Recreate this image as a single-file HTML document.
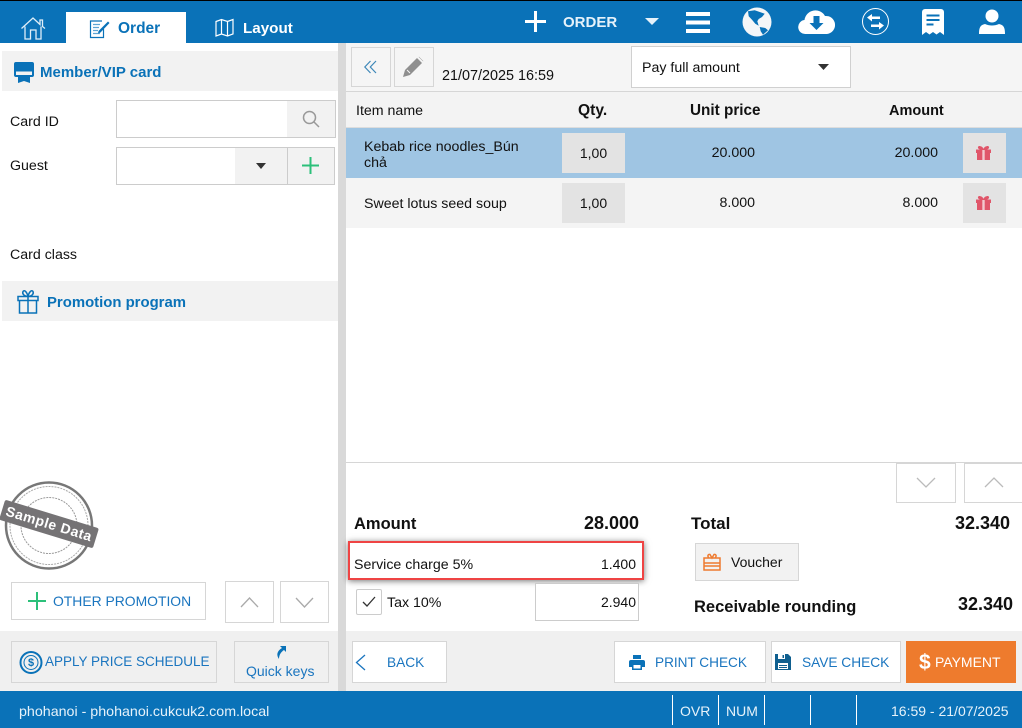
<!DOCTYPE html>
<html><head><meta charset="utf-8">
<style>
html,body{margin:0;padding:0;width:1022px;height:728px;overflow:hidden;background:#fff}
body{font-family:"Liberation Sans",sans-serif;font-size:14.2px;color:#111;position:relative}
.a,.t,svg.i{position:absolute}
.t{white-space:nowrap;line-height:16px}
.box{position:absolute;box-sizing:border-box;border:1px solid #d6d6d6;background:#fff}
.g{background:#f2f2f2}
.b{font-weight:bold}
.bl{color:#0a72b8}
.r{text-align:right}
</style></head><body>
<!-- header -->
<div class="a" style="left:0;top:0;width:1022px;height:43px;background:#0a72b8"></div>
<div class="a" style="left:0;top:0;width:1022px;height:1px;background:#000"></div>
<div class="a" style="left:66px;top:12px;width:120px;height:31px;background:#fff"></div>
<svg class="i" style="left:20px;top:16px" width="26" height="24" viewBox="0 0 26 24" fill="none" stroke="#dfeef8" stroke-width="1.3"><path d="M1.5 12.500 13 2l7 6.500V4h2.500v6.500L25 12.500M5 10.500V23h5.500v-9h5.500v9H21V10.500"/></svg>
<svg class="i" style="left:89px;top:18px" width="22" height="21" viewBox="0 0 22 21" fill="none" stroke="#0a72b8"><path d="M13 3H1.500v16.500h13V11" stroke-width="1.200"/><path d="M4 6.500h7M4 9.500h6M4 12.500h5M4 15.500h7" stroke-width="1.200" stroke="#5fa5d4"/><path d="M9.500 13 19 3.500l1.500 1.500-9 9.500-2.500 1z" fill="#0a72b8" stroke="none"/></svg>
<div class="t b bl" style="left:118px;top:21px;font-size:15.500px">Order</div>
<svg class="i" style="left:215px;top:18px" width="19" height="19" viewBox="0 0 19 19" fill="none" stroke="#fff" stroke-width="1.200"><path d="M1 3.500 6.500 1.500l6 2 5.500-2V16l-5.500 2-6-2L1 18zM6.500 1.500V16M12.500 3.500V18"/></svg>
<div class="t b" style="left:243px;top:21px;font-size:15.200px;color:#fff">Layout</div>
<svg class="i" style="left:525px;top:11px" width="21" height="21" viewBox="0 0 21 21" fill="#fff"><path d="M9 0h3v9h9v3h-9v9H9v-9H0V9h9z"/></svg>
<div class="t b" style="left:563px;top:15px;font-size:15px;color:#e6f2fa">ORDER</div>
<svg class="i" style="left:645px;top:18px" width="14" height="8" viewBox="0 0 14 8" fill="#e6f2fa"><path d="M0 0h14L7 7z"/></svg>
<svg class="i" style="left:686px;top:12px" width="24" height="21" viewBox="0 0 24 21" fill="#fff"><path d="M0 0h24v4H0zM0 8.500h24v4H0zM0 17h24v4H0z"/></svg>
<svg class="i" style="left:742px;top:7px" width="30" height="30" viewBox="0 0 30 30"><circle cx="15" cy="15" r="14.500" fill="#f4f6f8"/><path d="M6 4.300 12.700 3.300 22.700 6.700 20 10 16.700 12 15.300 14.300 16.700 18.700 13.300 16.700 10 12.700 6.700 9.300zM17.700 20 23.300 21 26 23.300 21 27.700 18.700 24.300z" fill="#0a72b8"/></svg>
<svg class="i" style="left:798px;top:9px" width="37" height="26" viewBox="0 0 37 26"><path d="M8 25a7 7 0 0 1-1.500-14A11 11 0 0 1 27 7a9 9 0 0 1 2 18z" fill="#fff"/><path d="M15.500 7h6v7h4L18.500 21l-7-7h4z" fill="#0a72b8"/></svg>
<svg class="i" style="left:861px;top:7px" width="29" height="29" viewBox="0 0 29 29" fill="none" stroke="#fff"><circle cx="14.500" cy="14.500" r="13" stroke-width="1"/><path d="M6 10.500 11 7v2.500h8v2.500h-8v2.500zM23 18.500 18 15v2.500h-8V20h8v2.500z" fill="#fff" stroke="none"/></svg>
<svg class="i" style="left:922px;top:9px" width="22" height="26" viewBox="0 0 22 26"><path d="M3 0h16a3 3 0 0 1 3 3v23l-4-3-3.500 2.500L11 23l-3.500 2.500L4 23l-4 3V3a3 3 0 0 1 3-3z" fill="#fff"/><path d="M4.500 5.500h13v2h-13zM4.500 10h13v2h-13zM4.500 14.500h7v2h-7z" fill="#0a72b8"/></svg>
<svg class="i" style="left:979px;top:9px" width="26" height="26" viewBox="0 0 26 26" fill="#fff"><circle cx="13" cy="7" r="6.500"/><path d="M0 25c0-6 1-9 6-10 4 2 10 2 14 0 5 1 6 4 6 10z"/></svg>

<!-- left panel -->
<div class="a" style="left:338px;top:43px;width:8px;height:648px;background:#d9d9d9"></div>
<div class="a g" style="left:2px;top:51px;width:336px;height:40px"></div>
<svg class="i" style="left:14px;top:62px" width="20" height="21" viewBox="0 0 20 21"><path d="M2 0h16a2 2 0 0 1 2 2v11a2 2 0 0 1-2 2h-2v6l-6-2-6 2v-6H2a2 2 0 0 1-2-2V2a2 2 0 0 1 2-2z" fill="#0a72b8"/><path d="M2 9.500h16v3.500H2z" fill="#f2f2f2"/></svg>
<div class="t b bl" style="left:40px;top:65px;font-size:15px">Member/VIP card</div>
<div class="t" style="left:10px;top:114px">Card ID</div>
<div class="t" style="left:10px;top:158px">Guest</div>
<div class="box" style="left:116px;top:100px;width:220px;height:38px;border-color:#ccc"></div>
<div class="a g" style="left:287px;top:101px;width:48px;height:36px"></div>
<svg class="i" style="left:302px;top:110px" width="18" height="18" viewBox="0 0 18 18" fill="none" stroke="#999" stroke-width="1.500"><circle cx="7.500" cy="7.500" r="6"/><path d="m12 12 5 5"/></svg>
<div class="box" style="left:116px;top:147px;width:219px;height:38px;border-color:#ccc"></div>
<div class="a g" style="left:235px;top:148px;width:52px;height:36px"></div>
<div class="a" style="left:287px;top:147px;width:1px;height:38px;background:#ccc"></div>
<div class="a g" style="left:288px;top:148px;width:46px;height:36px"></div>
<svg class="i" style="left:256px;top:163px" width="10" height="6" viewBox="0 0 10 6" fill="#333"><path d="M0 0h10L5 6z"/></svg>
<svg class="i" style="left:302px;top:157px" width="17" height="17" viewBox="0 0 17 17" fill="#2cc07a"><path d="M7.500 0h2v7.500H17v2H9.500V17h-2V9.500H0v-2h7.500z"/></svg>
<div class="t" style="left:10px;top:247px">Card class</div>
<div class="a g" style="left:2px;top:281px;width:336px;height:40px"></div>
<svg class="i" style="left:17px;top:289px" width="22" height="25" viewBox="0 0 22 25" fill="none" stroke="#0a72b8" stroke-width="1.500"><path d="M1 7.500h20v4H1zM2.500 11.500V24h17V11.500M11 7.500V24M11 7.500C7 7 5 5 6 2.500 7.500 .5 10 3 11 7.500c1-4.500 3.500-7 5-5 1 2.500-1 4.500-5 5z"/></svg>
<div class="t b bl" style="left:47px;top:295px;font-size:14.900px">Promotion program</div>

<!-- stamp -->
<svg class="i" style="left:0;top:478px" width="102" height="96" viewBox="0 0 102 96">
<circle cx="49" cy="47.500" r="43" fill="none" stroke="#777" stroke-width="2.500"/>
<circle cx="49" cy="47.500" r="39" fill="none" stroke="#aaa" stroke-width="1" stroke-dasharray="2 1"/>
<circle cx="49" cy="47.500" r="28" fill="none" stroke="#999" stroke-width="1" stroke-dasharray="2 1"/>
<g transform="rotate(17 49 46)"><rect x="0" y="35.500" width="98" height="21" rx="2" fill="#757375"/>
<text x="49" y="50.500" text-anchor="middle" font-family="Liberation Sans" font-weight="bold" font-size="14" fill="#fff" letter-spacing=".5">Sample Data</text></g>
</svg>

<div class="box" style="left:11px;top:582px;width:195px;height:38px"></div>
<svg class="i" style="left:28px;top:592px" width="18" height="18" viewBox="0 0 18 18" fill="#2cc07a"><path d="M8 0h2v8h8v2h-8v8H8v-8H0V8h8z"/></svg>
<div class="t bl" style="left:53px;top:593px;font-size:13.900px;color:#1a75bf">OTHER PROMOTION</div>
<div class="box" style="left:225px;top:581px;width:49px;height:42px"></div>
<div class="box" style="left:280px;top:581px;width:49px;height:42px"></div>
<svg class="i" style="left:240px;top:597px" width="19" height="11" viewBox="0 0 19 11" fill="none" stroke="#aaa" stroke-width="1.300"><path d="m1 10 8.500-9 8.500 9"/></svg>
<svg class="i" style="left:295px;top:597px" width="19" height="11" viewBox="0 0 19 11" fill="none" stroke="#aaa" stroke-width="1.300"><path d="m1 1 8.500 9 8.500-9"/></svg>

<!-- left footer -->
<div class="a" style="left:0;top:631px;width:338px;height:60px;background:#f0f0f0"></div>
<div class="box" style="left:11px;top:641px;width:206px;height:42px;background:#f0f0f0"></div>
<svg class="i" style="left:19px;top:650px" width="25" height="25" viewBox="0 0 25 25" fill="none" stroke="#0a72b8"><circle cx="12" cy="12.500" r="10.500" stroke-width="2"/><circle cx="12" cy="12.500" r="7" stroke-width="1"/></svg>
<div class="t" style="left:28px;top:655px;font-size:11px;color:#0a72b8;font-weight:bold">$</div>
<div class="t" style="left:45px;top:654px;font-size:13.500px;color:#1a75bf;width:166px;overflow:hidden">APPLY PRICE SCHEDULE</div>
<div class="box" style="left:234px;top:641px;width:95px;height:42px;background:#f0f0f0"></div>
<svg class="i" style="left:275px;top:646px" width="11" height="13" viewBox="0 0 11 13" fill="#0a72b8"><path d="M5 0h6v6L9 4C6 6 4 9 4 13 1 9 2 5 7 2z"/></svg>
<div class="t" style="left:246px;top:663px;font-size:14px;color:#1a75bf">Quick keys</div>

<!-- right toolbar -->
<div class="a" style="left:346px;top:43px;width:676px;height:48px;background:#f5f5f5"></div>
<div class="a" style="left:346px;top:91px;width:676px;height:1px;background:#d6d6d6"></div>
<div class="box" style="left:351px;top:47px;width:40px;height:40px;background:#f5f5f5"></div>
<div class="box" style="left:394px;top:47px;width:40px;height:40px;background:#f5f5f5"></div>
<svg class="i" style="left:364px;top:60px" width="13" height="14" viewBox="0 0 13 14" fill="none" stroke="#3d87b8" stroke-width="1.200"><path d="M6.500 1 .8 7l5.700 6M12 1 6.300 7l5.700 6"/></svg>
<svg class="i" style="left:403px;top:56px" width="21" height="21" viewBox="0 0 21 21"><path d="M0 21l2-7L14 2l5 5L7 19z" fill="#8f8f8f"/><path d="M15 1l1-1 5 5-1 1zM4 14l3 3" fill="#8f8f8f" stroke="#f5f5f5"/></svg>
<div class="t" style="left:442px;top:68px;font-size:14.400px">21/07/2025 16:59</div>
<div class="box" style="left:631px;top:46px;width:220px;height:42px;border-color:#d0d0d0"></div>
<div class="t" style="left:642px;top:60px">Pay full amount</div>
<svg class="i" style="left:818px;top:64px" width="11" height="6" viewBox="0 0 11 6" fill="#333"><path d="M0 0h11L5.500 6z"/></svg>

<!-- table -->
<div class="a" style="left:346px;top:92px;width:676px;height:35px;background:#f3f3f3"></div>
<div class="a" style="left:346px;top:127px;width:676px;height:1px;background:#ddd"></div>
<div class="t" style="left:356px;top:103px">Item name</div>
<div class="t b" style="left:578px;top:103px;font-size:15.600px">Qty.</div>
<div class="t b" style="left:690px;top:103px;font-size:15.300px">Unit price</div>
<div class="t b" style="left:889px;top:103px;font-size:14.500px">Amount</div>
<div class="a" style="left:346px;top:128px;width:676px;height:50px;background:#9fc5e3"></div>
<div class="a" style="left:346px;top:178px;width:676px;height:50px;background:#f4f4f4"></div>
<div class="t" style="left:364px;top:139px;line-height:16px">Kebab rice noodles_Bún<br>chả</div>
<div class="t" style="left:364px;top:196px">Sweet lotus seed soup</div>
<div class="a" style="left:562px;top:133px;width:63px;height:40px;background:#e3e3e3;text-align:center;line-height:40px;font-size:14px">1,00</div>
<div class="a" style="left:562px;top:183px;width:63px;height:40px;background:#e3e3e3;text-align:center;line-height:40px;font-size:14px">1,00</div>
<div class="t r" style="right:267px;top:145px">20.000</div>
<div class="t r" style="right:267px;top:195px">8.000</div>
<div class="t r" style="right:84px;top:145px">20.000</div>
<div class="t r" style="right:84px;top:195px">8.000</div>
<div class="a" style="left:963px;top:133px;width:43px;height:40px;background:#e3e3e3"></div>
<div class="a" style="left:963px;top:183px;width:43px;height:40px;background:#e3e3e3"></div>
<svg class="i" style="left:976px;top:146px" width="15" height="14" viewBox="0 0 15 14"><path d="M0 3.500h15V7h-1v7H1V7H0zM3 0c2 0 4 1 4.500 3C8 1 10 0 12 0c2 1 1 3-1 3.500H4C2 3 1 1 3 0z" fill="#e0566a"/><path d="M6.300 4h2.400v10H6.300z" fill="#f3c9cf"/></svg>
<svg class="i" style="left:976px;top:196px" width="15" height="14" viewBox="0 0 15 14"><path d="M0 3.500h15V7h-1v7H1V7H0zM3 0c2 0 4 1 4.500 3C8 1 10 0 12 0c2 1 1 3-1 3.500H4C2 3 1 1 3 0z" fill="#e0566a"/><path d="M6.300 4h2.400v10H6.300z" fill="#f3c9cf"/></svg>

<!-- summary -->
<div class="a" style="left:346px;top:462px;width:676px;height:1px;background:#d6d6d6"></div>
<div class="box" style="left:896px;top:463px;width:60px;height:40px"></div>
<div class="box" style="left:964px;top:463px;width:60px;height:40px"></div>
<svg class="i" style="left:916px;top:477px" width="20" height="11" viewBox="0 0 20 11" fill="none" stroke="#bbb" stroke-width="1.300"><path d="m1 1 9 9 9-9"/></svg>
<svg class="i" style="left:984px;top:477px" width="20" height="11" viewBox="0 0 20 11" fill="none" stroke="#bbb" stroke-width="1.300"><path d="m1 10 9-9 9 9"/></svg>

<div class="t b" style="left:354px;top:516px;font-size:16.500px">Amount</div>
<div class="t b r" style="right:383px;top:515px;font-size:18px">28.000</div>
<div class="a" style="left:348px;top:541px;width:296px;height:39px;border:2.500px solid #ef4444;box-shadow:0 1px 6px rgba(0,0,0,.55);background:#fff;box-sizing:border-box"></div>
<div class="t" style="left:354px;top:557px">Service charge 5%</div>
<div class="t r" style="right:386px;top:556px;font-size:14px">1.400</div>
<div class="box" style="left:356px;top:589px;width:26px;height:26px;border-color:#ccc;border-radius:2px"></div>
<svg class="i" style="left:362px;top:596px" width="14" height="11" viewBox="0 0 14 11" fill="none" stroke="#333" stroke-width="1.300"><path d="m1 6 4 4 8-9"/></svg>
<div class="t" style="left:387px;top:595px">Tax 10%</div>
<div class="box" style="left:535px;top:583px;width:104px;height:38px;border-color:#ccc"></div>
<div class="t r" style="right:386px;top:594px;font-size:14px">2.940</div>

<div class="t b" style="left:691px;top:516px;font-size:17px">Total</div>
<div class="t b r" style="right:12px;top:515px;font-size:18px">32.340</div>
<div class="box" style="left:695px;top:543px;width:104px;height:38px;background:#f2f2f2"></div>
<svg class="i" style="left:703px;top:553px" width="18" height="18" viewBox="0 0 18 18" fill="none" stroke="#ee7b30" stroke-width="1.500"><path d="M1 5h16v12H1zM1 10h16M1 13h16M6 5C4 3 5 1 7 1.500L9 5l2-3.500C13 1 14 3 12 5"/></svg>
<div class="t" style="left:731px;top:554px;font-size:14px">Voucher</div>
<div class="t b" style="left:694px;top:599px;font-size:16.500px">Receivable rounding</div>
<div class="t b r" style="right:9px;top:596px;font-size:18px">32.340</div>

<!-- right footer -->
<div class="a" style="left:346px;top:631px;width:676px;height:60px;background:#f0f0f0"></div>
<div class="box" style="left:352px;top:641px;width:95px;height:42px"></div>
<svg class="i" style="left:355px;top:654px" width="11" height="17" viewBox="0 0 11 17" fill="none" stroke="#1a75bf" stroke-width="1.300"><path d="M10 1 1.500 8.500 10 16"/></svg>
<div class="t" style="left:387px;top:655px;font-size:13.700px;color:#1a75bf">BACK</div>
<div class="box" style="left:614px;top:641px;width:152px;height:42px"></div>
<svg class="i" style="left:629px;top:655px" width="16" height="15" viewBox="0 0 16 15" fill="#0a72b8"><path d="M4 0h8v4H4zM2 5h12a2 2 0 0 1 2 2v5h-3v3H3v-3H0V7a2 2 0 0 1 2-2zM4.500 10v3.500h7V10z"/></svg>
<div class="t" style="left:655px;top:655px;font-size:13.600px;color:#1a75bf">PRINT CHECK</div>
<div class="box" style="left:771px;top:641px;width:130px;height:42px"></div>
<svg class="i" style="left:775px;top:654px" width="16" height="16" viewBox="0 0 16 16"><path d="M0 0h13l3 3v13H0z" fill="#0f5f8f"/><path d="M3 0h7v5H3zM3 9h10v6H3z" fill="#fff"/><path d="M4 11h8v1H4zM4 13h8v1H4zM7.500 1H9v3H7.500z" fill="#0f5f8f"/></svg>
<div class="t" style="left:802px;top:655px;font-size:13.700px;color:#1a75bf">SAVE CHECK</div>
<div class="a" style="left:906px;top:641px;width:110px;height:42px;background:#ee7b2d"></div>
<div class="t b" style="left:919px;top:652px;font-size:21px;line-height:21px;color:#fff">$</div>
<div class="t" style="left:935px;top:654px;font-size:14px;color:#fff">PAYMENT</div>

<!-- status -->
<div class="a" style="left:0;top:691px;width:1022px;height:37px;background:#0a72b8"></div>
<div class="t" style="left:19px;top:704px;font-size:14.250px;color:#e6f2fa">phohanoi - phohanoi.cukcuk2.com.local</div>
<div class="a" style="left:672px;top:695px;width:1px;height:30px;background:#fff"></div>
<div class="a" style="left:718px;top:695px;width:1px;height:30px;background:#fff"></div>
<div class="a" style="left:764px;top:695px;width:1px;height:30px;background:#fff"></div>
<div class="a" style="left:810px;top:695px;width:1px;height:30px;background:#fff"></div>
<div class="a" style="left:856px;top:695px;width:1px;height:30px;background:#fff"></div>
<div class="t" style="left:680px;top:703px;font-size:14px;color:#e6f2fa">OVR</div>
<div class="t" style="left:726px;top:703px;font-size:14px;color:#e6f2fa">NUM</div>
<div class="t" style="left:891px;top:703px;font-size:14px;color:#e6f2fa">16:59 - 21/07/2025</div>
</body></html>
